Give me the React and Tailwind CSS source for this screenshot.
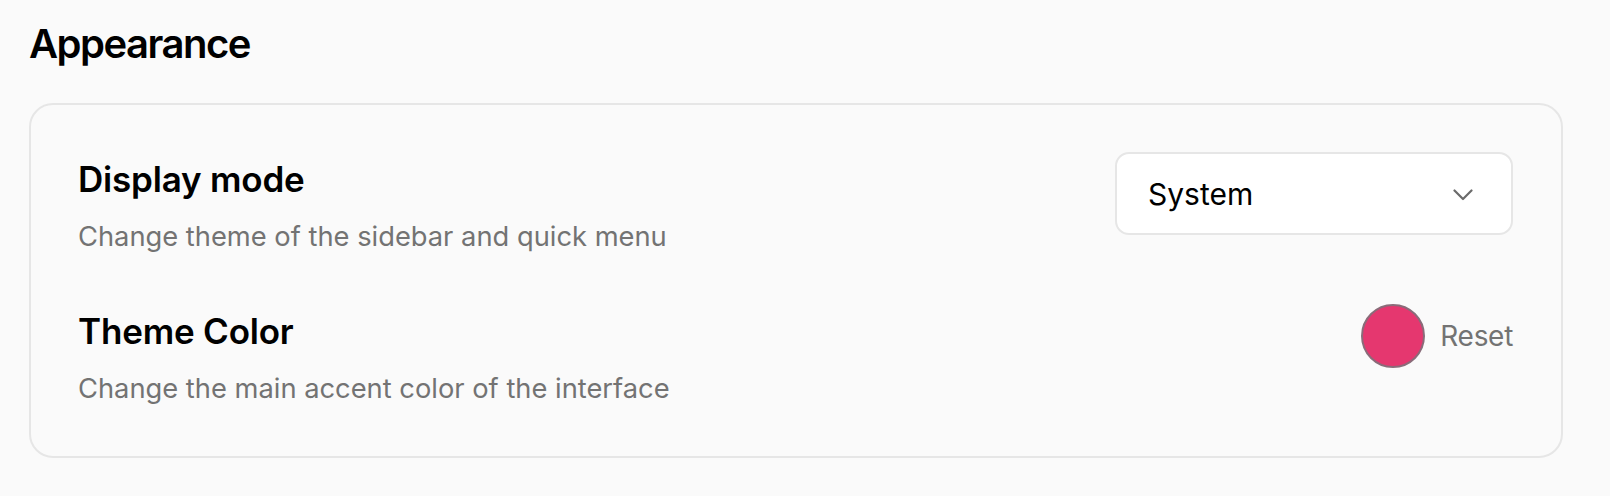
export default function App() {
  return (
    <div className="min-h-[496px] w-full bg-[#fafafa] pl-[29px] pr-[47px] pt-[20px] pb-[40px] text-black" style={{ fontFamily: 'Inter, "Noto Sans", sans-serif' }}>
      <h1 className="text-[40px] leading-[48px] font-semibold tracking-[-1.5px]">Appearance</h1>
      <div className="mt-[35px] rounded-[24px] border-2 border-[#e6e6e6] bg-[#fafafa] pl-[47px] pr-[48px] pt-[47px] pb-[47px]">
        <div className="flex items-start justify-between">
          <div className="flex flex-col">
            <div className="text-[35px] leading-[54px] font-semibold tracking-[-0.2px]">Display mode</div>
            <div className="mt-[11px] text-[27.3px] leading-[40px] text-[#737373]">Change theme of the sidebar and quick menu</div>
          </div>
          <div className="flex h-[83px] w-[398px] items-center justify-between rounded-[14px] border-2 border-[#e6e6e6] bg-white pl-[31px] pr-[38px]">
            <span className="text-[30px] leading-[40px]">System</span>
            <svg width="20" height="12" viewBox="0 0 20 12" fill="none" className="mt-[2px]">
              <path d="M1.5 1.5 L10 10 L18.5 1.5" stroke="#6b6b6b" strokeWidth="2.2" strokeLinecap="round" strokeLinejoin="round" />
            </svg>
          </div>
        </div>
        <div className="mt-[47px] flex items-start justify-between">
          <div className="flex flex-col">
            <div className="text-[35px] leading-[54px] font-semibold tracking-[-0.2px]">Theme Color</div>
            <div className="mt-[11px] text-[27.3px] leading-[40px] text-[#737373]">Change the main accent color of the interface</div>
          </div>
          <div className="flex items-center gap-[15px]">
            <div className="h-[64px] w-[64px] rounded-full border-2 border-[#8a6b79] bg-[#e5376f]"></div>
            <span className="text-[28px] leading-[40px] text-[#737373] tracking-[-0.3px]">Reset</span>
          </div>
        </div>
      </div>
    </div>
  );
}
